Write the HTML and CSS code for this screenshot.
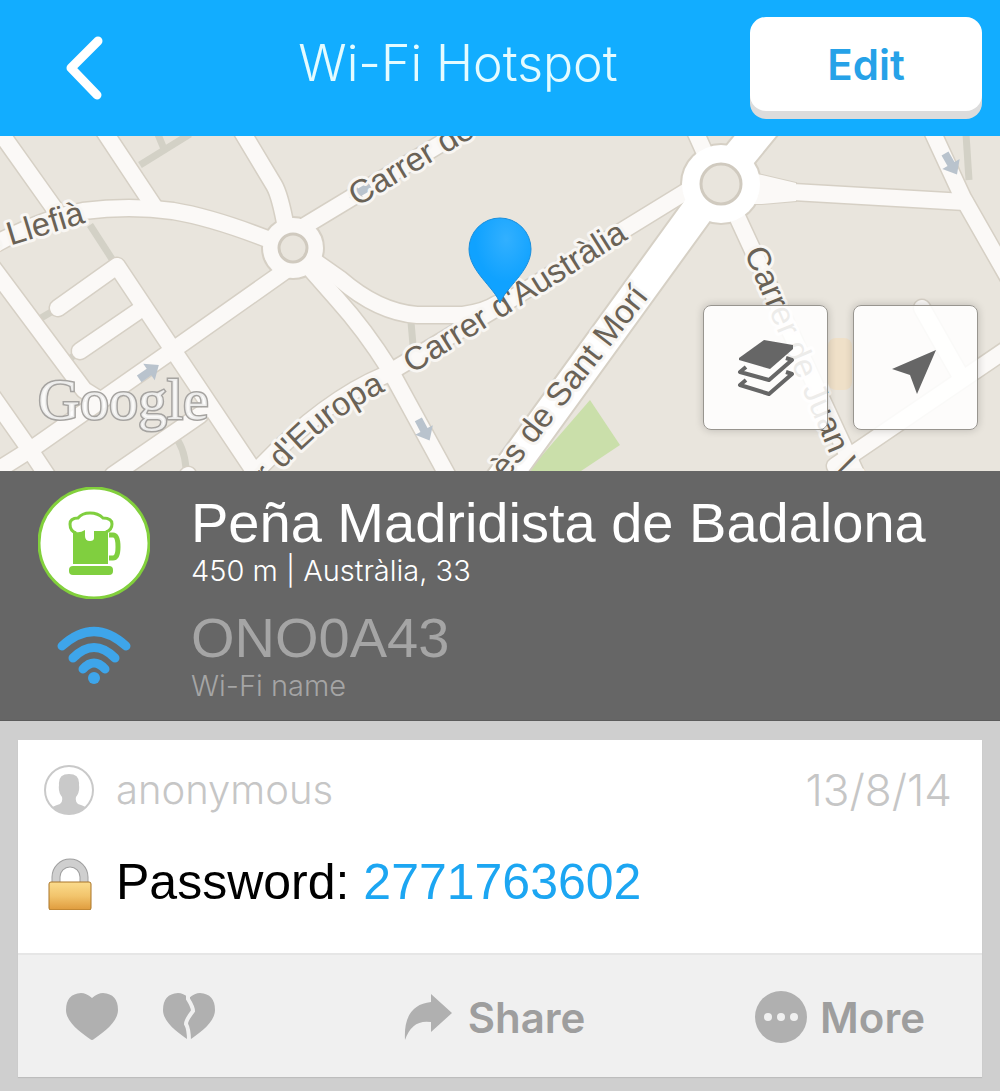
FILE: index.html
```html
<!DOCTYPE html>
<html lang="en">
<head>
    <meta charset="UTF-8">
    <meta name="viewport" content="width=device-width, initial-scale=1.0">
    <title>Wi-Fi Hotspot</title>
    <link rel="stylesheet" href="styles.css">
</head>
<body>
    <header class="navbar">
        <button class="back" aria-label="Back">
            <svg width="44" height="68" viewBox="0 0 44 68"><path d="M36 7 L9 34 L35 61"/></svg>
        </button>
        <h1>Wi-Fi Hotspot</h1>
        <button class="edit">Edit</button>
    </header>

    <section class="map">
        <svg class="map-canvas" viewBox="0 136 1000 335" preserveAspectRatio="xMidYMid slice">
            <defs>
                <g id="streets">
                    <path d="M-5 125 L54 208"/>
                    <path d="M100 125 L155 208"/>
                    <path d="M-10 247 Q40 219 83 211 Q130 205 173 211 Q215 218 275 242"/>
                    <path d="M238 125 L274 185 Q280 195 286 228"/>
                    <path d="M293 233 L480 120"/>
                    <path d="M285 271 L173 350 L33 448 L-10 475"/>
                    <path d="M58 308 L117 266 L173 350 L260 480"/>
                    <path d="M137 312 L80 351"/>
                    <path d="M-10 264 L84 390 L100 400"/>
                    <path d="M-10 393 L30 450 L50 480"/>
                    <path d="M113 475 L200 415"/>
                    <path d="M188 475 L190 485"/>
                    <path d="M310 258 L340 279 Q378 312 417 315 L463 315 Q485 312 497 304"/>
                    <path d="M308 266 L337 299 Q365 330 390 370 L450 480"/>
                    <path d="M250 478 Q320 402 385 375 L500 306 L700 183"/>
                    <path d="M690 120 L708 160"/>
                    <path d="M926 118 L963 198 L1012 284"/>
                    <path d="M735 212 L860 482"/>
                    <path d="M1010 347 L835 466"/>
                    <path d="M922 308 L960 375"/>
                    <path d="M755 188 L793 192 L965 202"/>
                </g>
                <path id="taper" d="M745 172 L762 175 L796 183 L796 201 L762 204 L745 204 Z"/>
                <path id="avenue" d="M770 118 L721 178 L500 483"/>
                <path id="one-way" d="M-12 -4 L0 -4 L0 -10 L12 0 L0 10 L0 4 L-12 4 Z"/>
                <path id="europa" d="M269 485 Q332 409 410 381"/>
            </defs>

            <rect x="0" y="136" width="1000" height="335" fill="#e9e5dd"/>
            <path d="M590 400 L620 445 L575 475 L525 475 Z" fill="#cadfaa"/>
            <rect x="828" y="338" width="24" height="52" rx="8" fill="#efe0c8"/>

            <g class="footpaths">
                <path d="M90 225 L112 259"/>
                <path d="M140 165 L190 134"/>
                <path d="M157 132 L164 149"/>
                <path d="M411 322 L413 345"/>
                <path d="M966 134 L969 180"/>
                <path d="M174 436 Q184 446 186 468"/>
                <path d="M41 318 L58 308"/>
                <path d="M68 360 L80 351"/>
            </g>

            <use href="#streets" class="street-edge"/>
            <use href="#taper" class="taper-edge"/>
            <use href="#avenue" class="avenue-edge"/>
            <circle cx="293" cy="248" r="31" class="circle-edge"/>
            <circle cx="721" cy="184" r="40" class="circle-edge"/>
            <use href="#streets" class="street"/>
            <use href="#taper" fill="#fbf9f7"/>
            <circle cx="293" cy="248" r="30" fill="#fbf9f7"/>
            <use href="#avenue" class="avenue"/>
            <circle cx="721" cy="184" r="39" fill="#fff"/>
            <circle cx="293" cy="248" r="14" class="island"/>
            <circle cx="721" cy="184" r="20" class="island"/>

            <g fill="#b9c3cd">
                <use href="#one-way" transform="translate(149 372) rotate(-35)"/>
                <use href="#one-way" transform="translate(424 430) rotate(62)"/>
                <use href="#one-way" transform="translate(951 164) rotate(60)"/>
                <use href="#one-way" transform="translate(360 192) rotate(150)"/>
            </g>

            <g class="labels">
                <text transform="translate(-14 253) rotate(-17)">s Llefià</text>
                <text transform="translate(357 207) rotate(-31)">Carrer de</text>
                <text transform="translate(412 374) rotate(-32)">Carrer d'Austràlia</text>
                <text><textPath href="#europa">r d'Europa</textPath></text>
                <text transform="translate(506 480) rotate(-52)">ès de Sant Morí</text>
                <text transform="translate(744 252) rotate(67)">Carrer de Juan V</text>
            </g>

            <text class="google" x="38" y="419">Google</text>

            <defs>
                <radialGradient id="pin-fill" cx="0.6" cy="0.25" r="0.5">
                    <stop offset="0" stop-color="#32b0ff"/>
                    <stop offset="1" stop-color="#10a2ff"/>
                </radialGradient>
            </defs>
            <path d="M500 303 C494 287 469 271 469 249 A31 31 0 0 1 531 249 C531 271 506 287 500 303 Z" fill="url(#pin-fill)" stroke="#1b8fdc"/>
        </svg>

        <div class="map-tools">
            <button aria-label="Map layers">
                <svg width="60" height="60" viewBox="0 0 60 60">
                    <path class="solid" d="M28 2 L57 7 L57 11 L34 31 L3 22 L3 20 Z"/>
                    <path class="sheet" d="M10 29 L4 34 L33 42 L56 22 L50 20"/>
                    <path class="sheet" d="M10 42 L4 47 L33 56 L56 36 L50 34"/>
                </svg>
            </button>
            <button aria-label="My location">
                <svg width="60" height="60" viewBox="0 0 60 60">
                    <path class="solid" d="M50 12 L6 31 L24 37 L31 56 Z"/>
                </svg>
            </button>
        </div>
    </section>

    <section class="place">
        <div class="place-row">
            <div class="place-icon">
                <svg class="beer" width="112" height="112" viewBox="0 0 112 112">
                    <circle cx="56" cy="56" r="55" fill="#fff" stroke="#82d03c" stroke-width="3"/>
                    <path d="M35 40 H70 V77 H35 Z" fill="#80cf3f"/>
                    <path d="M71 48 H75 Q80 48 80 60 Q80 71 75 71 H71" fill="none" stroke="#80cf3f" stroke-width="5"/>
                    <path d="M38 45 Q33 43 33 37 Q33 31 40 31 Q43 27 53 26 Q61 27 65 32 Q74 32 74 38 Q74 44 67 44 H56 V51 Q56 54 52 54 Q47 54 47 49 V43 Q42 46 38 45 Z" fill="#fff"/>
                    <path d="M38 46 Q32 44 32 37 Q32 31 40 31 Q44 26 52 26 Q60 26 65 31 Q74 31 74 37 Q74 43 68 45" fill="none" stroke="#80cf3f" stroke-width="3"/>
                    <rect x="31" y="79" width="44" height="9" rx="4" fill="#80cf3f"/>
                </svg>
            </div>
            <div>
                <h2>Peña Madridista de Badalona</h2>
                <p>450 m | Austràlia, 33</p>
            </div>
        </div>
        <div class="place-row muted">
            <div class="place-icon">
                <svg class="wifi" width="80" height="64" viewBox="0 0 80 64">
                    <path d="M8 20 Q40 -9 72 20"/>
                    <path d="M19 32 Q40 11 61 32"/>
                    <path d="M29 43 Q40 31 51 43"/>
                    <circle cx="40" cy="52" r="6"/>
                </svg>
            </div>
            <div>
                <h2>ONO0A43</h2>
                <p>Wi-Fi name</p>
            </div>
        </div>
    </section>

    <main>
        <article class="card">
            <div class="card-body">
                <div class="author">
                    <svg width="50" height="50" viewBox="0 0 50 50">
                        <defs><clipPath id="avatar"><circle cx="25" cy="25" r="24"/></clipPath></defs>
                        <circle cx="25" cy="25" r="24" fill="#fff" stroke="#c9c9c9" stroke-width="2"/>
                        <path clip-path="url(#avatar)" fill="#c9c9c9" d="M25 9 Q36 9 35 20 Q36 27 32 32 Q31 37 34 39 Q42 41 44 45 V50 H6 V45 Q8 41 16 39 Q19 37 18 32 Q14 27 15 20 Q14 9 25 9 Z"/>
                    </svg>
                    <span>anonymous</span>
                    <time datetime="2014-08-13">13/8/14</time>
                </div>
                <div class="password">
                    <svg width="50" height="56" viewBox="0 0 50 56">
                        <defs>
                            <linearGradient id="brass" x2="0" y2="1">
                                <stop offset="0" stop-color="#fbdc8d"/>
                                <stop offset="0.5" stop-color="#f2c46c"/>
                                <stop offset="1" stop-color="#df9b3d"/>
                            </linearGradient>
                        </defs>
                        <path d="M12 31 V23 A14 14 0 0 1 40 23 V31" fill="none" stroke="#a0a0a0" stroke-width="9"/>
                        <path d="M12 31 V23 A14 14 0 0 1 40 23 V31" fill="none" stroke="#cfcfcf" stroke-width="7"/>
                        <rect x="5" y="28" width="42" height="28" rx="2" fill="url(#brass)" stroke="#a97529"/>
                    </svg>
                    <p>Password: <a href="#">2771763602</a></p>
                </div>
            </div>
            <footer class="actions">
                <div class="votes">
                    <button aria-label="Like">
                        <svg width="52" height="48" viewBox="0 0 52 48"><path d="M26 5 Q32 0 37 0 Q52 1 52 17 C52 30 35 41 28 46 Q26 48 24 46 C17 41 0 30 0 17 Q0 1 15 0 Q20 0 26 5 Z"/></svg>
                    </button>
                    <button aria-label="Dislike">
                        <svg width="52" height="48" viewBox="0 0 52 48">
                            <path d="M26 5 Q32 0 37 0 Q52 1 52 17 C52 30 35 41 28 46 Q26 48 24 46 C17 41 0 30 0 17 Q0 1 15 0 Q20 0 26 5 Z"/>
                            <path d="M25 0 V6 Q30 14 30 18 Q23 27 23 31 Q26 36 26 48" fill="none" stroke="#f0f0f0" stroke-width="4"/>
                        </svg>
                    </button>
                </div>
                <button>
                    <svg width="48" height="48" viewBox="0 0 48 48"><path d="M27 1 L48 20 L27 39 V29 Q8 26 1 47 Q-1 12 27 9 Z"/></svg>
                    Share
                </button>
                <button>
                    <svg width="52" height="52" viewBox="0 0 52 52">
                        <circle cx="26" cy="26" r="26"/>
                        <g fill="#f0f0f0"><circle cx="13" cy="26" r="4"/><circle cx="26" cy="26" r="4"/><circle cx="39" cy="26" r="4"/></g>
                    </svg>
                    More
                </button>
            </footer>
        </article>
    </main>
</body>
</html>
```
FILE: styles.css
```css
* {
    box-sizing: border-box;
}
body {
    margin: 0;
    background: #cfcfcf;
    font-family: "Liberation Sans", Arial, sans-serif;
}
h1, h2, p {
    margin: 0;
    font-weight: 400;
}
button {
    border: 0;
    padding: 0;
    background: none;
    font-family: Inter, sans-serif;
    cursor: pointer;
}
svg {
    display: block;
    flex-shrink: 0;
}

/* top bar */
.navbar {
    display: grid;
    grid-template-columns: 232px 1fr 232px;
    align-items: center;
    height: 136px;
    padding: 0 18px;
    background: #12adff;
}
.back {
    justify-self: start;
    padding-left: 44px;
}
.back path {
    fill: none;
    stroke: #fff;
    stroke-width: 9;
    stroke-linecap: round;
    stroke-linejoin: round;
}
.navbar h1 {
    padding: 0 84px 10px 0;
    color: #e4fbff;
    font: 300 50px/60px Inter, sans-serif;
    text-align: center;
    white-space: nowrap;
}
.edit {
    height: 94px;
    margin-bottom: 8px;
    border-radius: 16px;
    background: #fff;
    box-shadow: 0 8px 0 #dcdcdc;
    color: #26a2e8;
    font-size: 42px;
    font-weight: 600;
}

/* map */
.map {
    position: relative;
    height: 335px;
    overflow: hidden;
}
.map-canvas {
    width: 100%;
    height: 100%;
}
.footpaths {
    fill: none;
    stroke: #d3d1c6;
    stroke-width: 7;
}
.street-edge, .street, .avenue-edge, .avenue {
    fill: none;
    stroke-linecap: round;
    stroke-linejoin: round;
}
.street-edge {
    stroke: #d6d0c5;
    stroke-width: 19;
}
.street {
    stroke: #fbf9f7;
    stroke-width: 16;
}
.avenue-edge {
    stroke: #d6d0c5;
    stroke-width: 36;
}
.avenue {
    stroke: #fff;
    stroke-width: 32;
}
.circle-edge, .taper-edge {
    fill: #d6d0c5;
    stroke: #d6d0c5;
    stroke-width: 2;
}
.island {
    fill: #e9e5dd;
    stroke: #d0cabf;
    stroke-width: 3;
}
.labels {
    fill: #6a6256;
    font-size: 33px;
    stroke: #f8f6f3;
    stroke-width: 6;
    stroke-linejoin: round;
    paint-order: stroke;
}
.google {
    fill: rgba(255, 255, 255, 0.8);
    stroke: #a5a3a0;
    stroke-width: 3;
    paint-order: stroke;
    font-family: "Liberation Serif", serif;
    font-size: 58px;
}
.map-tools {
    position: absolute;
    right: 22px;
    bottom: 41px;
    display: flex;
    gap: 25px;
}
.map-tools button {
    display: grid;
    place-items: center;
    width: 125px;
    height: 125px;
    border: 1px solid #98958f;
    border-radius: 8px;
    background: rgba(255, 255, 255, 0.88);
    box-shadow: 0 0 8px rgba(0, 0, 0, 0.2);
}
.map-tools .solid {
    fill: #666;
}
.map-tools .sheet {
    fill: none;
    stroke: #666;
    stroke-width: 4;
    stroke-linejoin: round;
}

/* place details */
.place {
    display: grid;
    gap: 3px;
    height: 250px;
    padding: 16px 38px;
    align-content: start;
    border-bottom: 1px solid #5c5c5c;
    background: #666;
    color: #fff;
}
.place-row {
    display: flex;
    gap: 41px;
}
.place-icon {
    display: grid;
    place-items: center;
    flex: 0 0 112px;
    height: 112px;
}
.place h2 {
    padding-top: 4px;
    font-size: 56px;
    line-height: 64px;
    white-space: nowrap;
}
.place p {
    font: 300 29px/32px Inter, sans-serif;
}
.muted {
    color: #a5a5a5;
}
.wifi {
    fill: #3ea5ea;
}
.wifi path {
    fill: none;
    stroke: #3ea5ea;
    stroke-width: 9;
    stroke-linecap: round;
}

/* password card */
main {
    padding: 19px 18px 14px;
}
.card {
    background: #fff;
    box-shadow: 0 1px 1px #bdbdbd;
}
.card-body {
    height: 213px;
    padding: 20px 30px 0 26px;
}
.author {
    display: flex;
    align-items: center;
    gap: 22px;
    height: 60px;
    color: #c6c6c6;
    font: 300 40px/60px Inter, sans-serif;
}
.author time {
    margin-left: auto;
    font-size: 44px;
}
.password {
    display: flex;
    align-items: center;
    gap: 22px;
    padding-top: 34px;
    font-size: 50px;
    line-height: 56px;
}
.password a {
    color: #1ca6f2;
    text-decoration: none;
}
.actions {
    display: grid;
    grid-template-columns: 49fr 51fr auto;
    align-items: center;
    height: 124px;
    padding: 2px 57px 0 48px;
    border-top: 2px solid #e6e6e6;
    background: #f0f0f0;
}
.votes {
    display: flex;
    gap: 45px;
}
.actions button {
    display: flex;
    align-items: center;
    gap: 16px;
    color: #9e9e9e;
    font-size: 42px;
    font-weight: 600;
}
.actions > button:last-child {
    gap: 13px;
}
.actions svg {
    fill: #b0b0b0;
}
```
